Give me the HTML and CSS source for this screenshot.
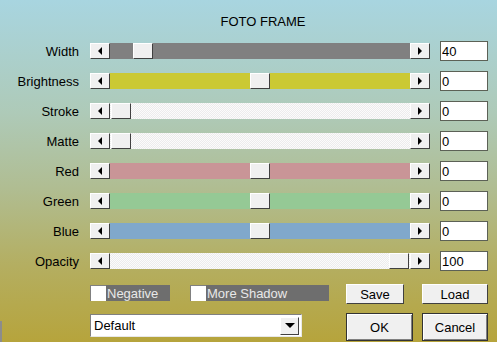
FILE: index.html
```html
<!DOCTYPE html>
<html lang="en">
<head>
    <meta charset="UTF-8">
    <meta name="viewport" content="width=device-width, initial-scale=1.0">
    <title>Foto Frame</title>
    <link rel="stylesheet" href="styles.css">
</head>
<body>
<h1 class="title">FOTO FRAME</h1>

<div class="rows">
    <div class="name">Width</div>
    <div class="slider">
        <span class="btn"><span class="arrow-left"></span></span>
        <span class="track gray"><span class="thumb" style="margin-left: 23px"></span></span>
        <span class="btn"><span class="arrow-right"></span></span>
    </div>
    <input class="value" type="text" value="40">

    <div class="name">Brightness</div>
    <div class="slider">
        <span class="btn"><span class="arrow-left"></span></span>
        <span class="track yellow"><span class="thumb" style="margin-left: 140px"></span></span>
        <span class="btn"><span class="arrow-right"></span></span>
    </div>
    <input class="value" type="text" value="0">

    <div class="name">Stroke</div>
    <div class="slider">
        <span class="btn"><span class="arrow-left"></span></span>
        <span class="track plain"><span class="thumb" style="margin-left: 1px"></span></span>
        <span class="btn"><span class="arrow-right"></span></span>
    </div>
    <input class="value" type="text" value="0">

    <div class="name">Matte</div>
    <div class="slider">
        <span class="btn"><span class="arrow-left"></span></span>
        <span class="track plain"><span class="thumb" style="margin-left: 1px"></span></span>
        <span class="btn"><span class="arrow-right"></span></span>
    </div>
    <input class="value" type="text" value="0">

    <div class="name">Red</div>
    <div class="slider">
        <span class="btn"><span class="arrow-left"></span></span>
        <span class="track red"><span class="thumb" style="margin-left: 140px"></span></span>
        <span class="btn"><span class="arrow-right"></span></span>
    </div>
    <input class="value" type="text" value="0">

    <div class="name">Green</div>
    <div class="slider">
        <span class="btn"><span class="arrow-left"></span></span>
        <span class="track green"><span class="thumb" style="margin-left: 140px"></span></span>
        <span class="btn"><span class="arrow-right"></span></span>
    </div>
    <input class="value" type="text" value="0">

    <div class="name">Blue</div>
    <div class="slider">
        <span class="btn"><span class="arrow-left"></span></span>
        <span class="track blue"><span class="thumb" style="margin-left: 140px"></span></span>
        <span class="btn"><span class="arrow-right"></span></span>
    </div>
    <input class="value" type="text" value="0">

    <div class="name">Opacity</div>
    <div class="slider">
        <span class="btn"><span class="arrow-left"></span></span>
        <span class="track plain"><span class="thumb" style="margin-left: 279px"></span></span>
        <span class="btn"><span class="arrow-right"></span></span>
    </div>
    <input class="value" type="text" value="100">
</div>

<div class="lower">
    <span class="stub"></span>
    <div class="left">
        <div class="checks">
            <div class="check negative"><span class="box"></span><span class="check-label">Negative</span></div>
            <div class="check shadow"><span class="box"></span><span class="check-label">More Shadow</span></div>
        </div>
        <div class="select">
            <span>Default</span>
            <span class="drop"><span class="arrow-down"></span></span>
        </div>
    </div>
    <div class="actions">
        <button class="button save">Save</button>
        <button class="button">Load</button>
        <button class="button default">OK</button>
        <button class="button default">Cancel</button>
    </div>
</div>
</body>
</html>
```

FILE: styles.css
```css
body {
  margin: 0;
  width: 497px;
  height: 342px;
  overflow: hidden;
  font-family: "Liberation Sans", Arial, sans-serif;
  font-size: 13px;
  color: #000;
  background: linear-gradient(to bottom, #a8d5e0 0%, #aecab8 33%, #b0bd92 55%, #b4ae60 78%, #b6a43c 100%);
}

.title {
  margin: 0 0 11px 0;
  padding: 14px 0 0 29px;
  height: 16px;
  line-height: 16px;
  font-size: 13px;
  font-weight: normal;
  text-align: center;
}

/* Slider rows */
.rows {
  display: grid;
  grid-template-columns: 80px 340px 48px;
  grid-auto-rows: 20px;
  column-gap: 10px;
  row-gap: 10px;
  align-items: center;
}

.name {
  text-align: right;
  padding-right: 1px;
  line-height: 20px;
  padding-top: 1px;
}

.slider {
  display: flex;
  height: 16px;
}

.btn,
.thumb,
.drop {
  box-sizing: border-box;
  background: #f0f0f0;
  border: 1px solid;
  border-color: #fff #404040 #404040 #fff;
}

.btn {
  width: 20px;
  height: 16px;
  display: flex;
  align-items: center;
  justify-content: center;
}

.arrow-left {
  border-right: 4px solid #000;
  border-top: 4px solid transparent;
  border-bottom: 4px solid transparent;
}

.arrow-right {
  border-left: 4px solid #000;
  border-top: 4px solid transparent;
  border-bottom: 4px solid transparent;
}

.arrow-down {
  border-top: 5px solid #000;
  border-left: 5px solid transparent;
  border-right: 5px solid transparent;
}

.track {
  flex: 1;
  display: flex;
}

.thumb {
  width: 20px;
  height: 16px;
}

.gray { background: #808080; }
.yellow { background: #cbc933; }
.red { background: #c99597; }
.green { background: #95c995; }
.blue { background: #80a8cb; }
.plain {
  background: repeating-conic-gradient(#fbfbfb 0 25%, #ececec 0 50%) 0 0 / 2px 2px;
}

.value {
  width: 48px;
  height: 20px;
  box-sizing: border-box;
  margin: 0;
  padding: 0 0 0 1px;
  border: 1px solid #5c6156;
  background: #fff;
  font: inherit;
  color: #000;
}

/* Bottom part */
.lower {
  display: flex;
  margin-top: 13px;
  height: 58px;
}

.stub {
  width: 2px;
  height: 21px;
  align-self: flex-end;
  background: #8c8c8c;
  margin-right: 88px;
}

.left {
  width: 240px;
  margin-right: 16px;
}

.checks {
  display: flex;
  margin-top: 1px;
  height: 16px;
}

.check {
  display: flex;
}

.check + .check {
  margin-left: 20px;
}

.box {
  width: 16px;
  height: 16px;
  box-sizing: border-box;
  background: #fff;
  border-top: 1px solid #808080;
  border-left: 1px solid #808080;
}

.check-label {
  background: #6e6e6e;
  color: #e8e8e8;
  line-height: 17px;
  padding-left: 1px;
  box-sizing: border-box;
}

.negative .check-label { width: 64px; }
.shadow .check-label { width: 123px; }

.select {
  margin-top: 13px;
  width: 212px;
  height: 23px;
  box-sizing: border-box;
  background: #fff;
  border: 1px solid;
  border-color: #808080 #e8e8e8 #e8e8e8 #808080;
  display: flex;
  align-items: center;
  justify-content: space-between;
  padding: 0 2px 0 3px;
}

.drop {
  width: 19px;
  height: 18px;
  display: flex;
  align-items: center;
  justify-content: center;
}

.actions {
  display: grid;
  grid-template-columns: 67px 66px;
  grid-template-rows: 20px 28px;
  column-gap: 9px;
  row-gap: 9px;
}

.button {
  margin: 0;
  padding: 0;
  font: inherit;
  color: #000;
  background: #f0f0f0;
  border: 1px solid;
  border-color: #fff #404040 #404040 #fff;
}

.save {
  width: 58px;
}

.default {
  border: 1px solid #333;
  box-shadow: inset 1px 1px #fff, inset -1px -1px #808080;
}
```
